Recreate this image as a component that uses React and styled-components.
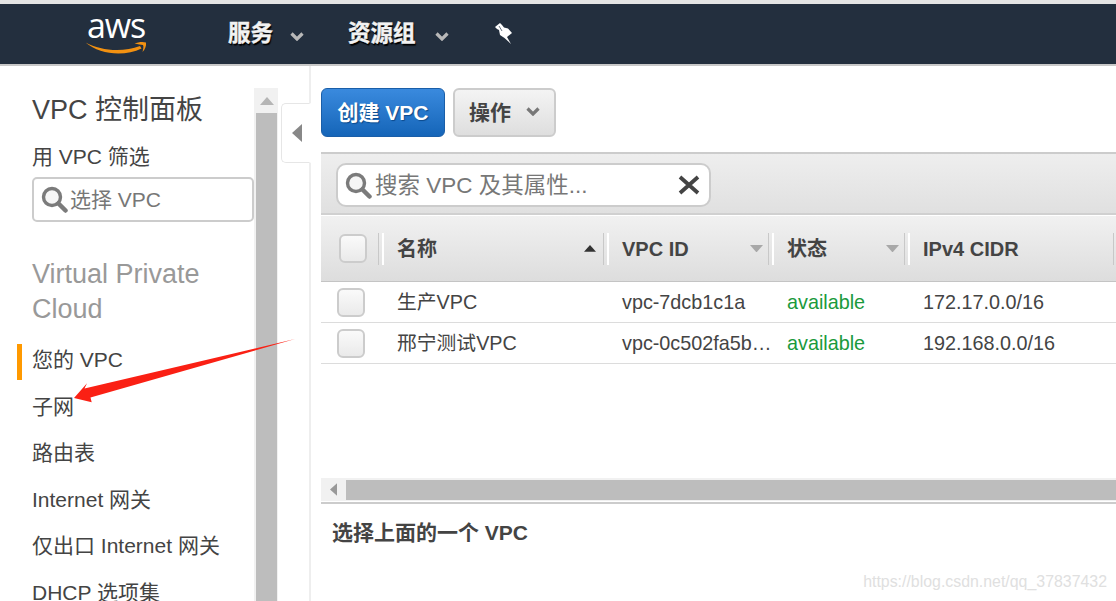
import React from "react";
import styled, { createGlobalStyle } from "styled-components";

const FONT = `"Liberation Sans", "Noto Sans CJK SC", sans-serif`;

const Global = createGlobalStyle`
  html, body { margin: 0; padding: 0; height: 601px; overflow: hidden; background: #fff; }
  body { font-family: ${FONT}; color: #444; }
  * { box-sizing: border-box; }
`;

const Page = styled.div`
  position: relative;
  width: 1116px;
  height: 601px;
  overflow: hidden;
  display: flex;
  flex-direction: column;
  border-top: 4px solid #e4e4e4;
`;

const Nav = styled.header`
  flex: none;
  height: 62px;
  background: #232f3e;
  border-bottom: 2px solid #c8c8c8;
  display: flex;
  align-items: center;
  padding-left: 85px;
`;

const Logo = styled.div`
  width: 62px;
  height: 46px;
  margin-top: -4px;
  margin-right: 81px;
  display: flex;
  flex-direction: column;
  align-items: center;
`;

const LogoText = styled.span`
  color: #fff;
  font-family: "Open Sans", sans-serif;
  font-size: 34px;
  line-height: 32px;
  height: 32px;
  letter-spacing: -1.1px;
`;

const NavItem = styled.div`
  display: flex;
  align-items: center;
  width: ${(p) => p.$w}px;
  gap: ${(p) => p.$gap}px;
  color: #f2f2f2;
  font-size: 22.5px;
  font-weight: 700;
  -webkit-text-stroke: 0.4px #f2f2f2;
  text-shadow: 1px 2px 1px #000;
  line-height: 30px;
`;

const NavChevron = styled.span`
  display: flex;
  margin-top: 4px;
`;

const Body = styled.div`
  flex: 1;
  display: flex;
  min-height: 0;
`;

const Sidebar = styled.aside`
  flex: none;
  width: 256px;
  padding: 27px 0 0 32px;
  overflow: hidden;
`;

const SideTitle = styled.h2`
  margin: 0;
  font-size: 27px;
  font-weight: 400;
  line-height: 34px;
  color: #444;
  white-space: nowrap;
`;

const FilterLabel = styled.div`
  margin-top: 16px;
  font-size: 21px;
  line-height: 28px;
  color: #444;
`;

const FilterBox = styled.div`
  margin-top: 6px;
  width: 222px;
  height: 45px;
  border: 2px solid #ccc;
  border-radius: 5px;
  display: flex;
  align-items: center;
  padding-left: 7px;
  gap: 2px;
  font-size: 21px;
  color: #777;
  background: #fff;
`;

const FilterText = styled.span`
  padding-bottom: 4px;
`;

const SectionTitle = styled.h3`
  margin: 35px 0 10px;
  width: 200px;
  font-size: 27px;
  font-weight: 400;
  line-height: 35px;
  color: #999;
`;

const SideItem = styled.div`
  position: relative;
  height: 46.5px;
  line-height: 46.5px;
  font-size: 21px;
  color: #444;
  white-space: nowrap;
  &::before {
    content: "";
    display: ${(p) => (p.$active ? "block" : "none")};
    position: absolute;
    left: -15px;
    top: 7px;
    width: 5px;
    height: 36px;
    background: #ff9900;
  }
`;

const VScroll = styled.div`
  flex: none;
  width: 24px;
  margin-left: -2px;
  margin-top: 22px;
  padding: 0 1px 0 2px;
  background: #f1f1f1;
  display: flex;
  flex-direction: column;
`;

const VArrow = styled.div`
  flex: none;
  height: 25px;
  display: flex;
  align-items: center;
  justify-content: center;
`;

const VThumb = styled.div`
  flex: 1;
  background: #bdbdbd;
`;

const Gutter = styled.div`
  flex: none;
  width: 33px;
  padding-top: 37px;
  padding-left: 3px;
  border-right: 2px solid #eeeeee;
`;

const Handle = styled.div`
  width: 30px;
  height: 60px;
  background: #fff;
  border: 1px solid #e6e6e6;
  border-right: 2px solid #fff;
  border-radius: 5px 0 0 5px;
  display: flex;
  align-items: center;
  padding-left: 10px;
`;

const Main = styled.main`
  flex: 1;
  min-width: 0;
  padding: 22px 0 0 10px;
  display: flex;
  flex-direction: column;
`;

const Actions = styled.div`
  display: flex;
  gap: 8px;
  height: 49px;
`;

const PrimaryButton = styled.div`
  width: 124px;
  border: 1px solid #1a5ea8;
  border-radius: 6px;
  background: linear-gradient(#3a8ade, #1565b8);
  color: #fff;
  font-size: 21px;
  font-weight: 700;
  display: flex;
  align-items: center;
  justify-content: center;
  padding-bottom: 4px;
  text-shadow: 1px 1px 1px #0c4a8c;
`;

const GreyButton = styled.div`
  width: 103px;
  border: 2px solid #ccc;
  border-radius: 6px;
  background: linear-gradient(#f4f4f4, #dedede);
  color: #444;
  font-size: 21px;
  font-weight: 700;
  display: flex;
  align-items: center;
  padding: 0 0 4px 14px;
  gap: 15px;
`;

const ButtonChevron = styled.span`
  display: flex;
  margin-top: 2px;
`;

const Toolbar = styled.div`
  margin-top: 15px;
  height: 63px;
  border-top: 2px solid #ccc;
  border-bottom: 2px solid #d0d0d0;
  background: linear-gradient(#eeeeee, #e0e0e0);
  padding: 9px 0 0 15px;
`;

const SearchBox = styled.div`
  width: 375px;
  height: 44px;
  border: 2px solid #ccc;
  border-radius: 10px;
  background: #fff;
  display: flex;
  align-items: center;
  padding: 0 9px 0 7px;
  font-size: 22.5px;
  color: #777;
  gap: 3px;
`;

const SearchText = styled.span`
  flex: 1;
  white-space: nowrap;
  padding-bottom: 4px;
`;

const Grid = styled.div`
  display: grid;
  grid-template-columns: 60px 225px 165px 136px 209px 1fr;
  align-items: center;
  height: ${(p) => p.$h}px;
`;

const HeadRow = styled(Grid)`
  margin-top: 1px;
  background: linear-gradient(#f1f1f1, #dddddd);
  border-bottom: 1px solid #c4c4c4;
`;

const BodyRow = styled(Grid)`
  border-bottom: 1px solid #dcdcdc;
`;

const HeadCell = styled.div`
  position: relative;
  height: 32px;
  padding: 0 0 0 16px;
  font-size: 20px;
  font-weight: 700;
  line-height: 32px;
  color: #444;
  display: flex;
  align-items: center;
  justify-content: space-between;
  white-space: nowrap;
  &::after {
    content: "";
    position: absolute;
    right: -3px;
    top: 0;
    bottom: 0;
    width: 3px;
    border-left: 1px solid #c8c8c8;
    border-right: 2px solid #fff;
    display: ${(p) => (p.$last ? "none" : "block")};
  }
`;

const CheckCell = styled(HeadCell)`
  padding: 0 0 0 18px;
`;

const SortMark = styled.span`
  display: flex;
  margin-right: ${(p) => p.$mr}px;
`;

const Check = styled.div`
  width: 28px;
  height: 29px;
  border: 2px solid #ccc;
  border-radius: 6px;
  background: linear-gradient(#fafafa, #eaeaea);
`;

const Cell = styled.div`
  padding-left: 16px;
  font-size: 19.8px;
  line-height: 24px;
  color: ${(p) => (p.$green ? "#1a9a3c" : "#444")};
  white-space: nowrap;
`;

const RowCheck = styled.div`
  padding-left: 16px;
`;

const Rows = styled.div`
  height: 196px;
`;

const HScroll = styled.div`
  height: 24px;
  background: #f1f1f1;
  display: flex;
  border-bottom: 1px solid #fff;
`;

const HArrow = styled.div`
  flex: none;
  width: 25px;
  display: flex;
  align-items: center;
  justify-content: center;
`;

const HThumb = styled.div`
  flex: 1;
  margin: 2px 0 1px;
  background: #bdbdbd;
`;

const Rule = styled.div`
  height: 2px;
  background: #cccccc;
`;

const Detail = styled.h4`
  margin: 15px 0 0 11px;
  font-size: 21px;
  font-weight: 700;
  line-height: 28px;
  color: #444;
`;

const Watermark = styled.div`
  position: absolute;
  right: 9px;
  bottom: 8px;
  font-size: 15.9px;
  line-height: 22px;
  color: #e0e0e0;
`;

const ArrowOverlay = styled.svg`
  position: absolute;
  left: 0;
  top: -4px;
  pointer-events: none;
`;

const Chevron = ({ color = "#b8b8b8", w = 14, h = 9 }) => (
  <svg width={w} height={h} viewBox="0 0 14 9">
    <path d="M1.5 1.5 L7 7 L12.5 1.5" fill="none" stroke={color} strokeWidth="3.2" />
  </svg>
);

const Tri = ({ dir, color, size = 14 }) => {
  const pts = { up: "0,8 7,0 14,8", down: "0,0 14,0 7,8" };
  return (
    <svg width={size} height={(size * 8) / 14} viewBox="0 0 14 8">
      <polygon points={pts[dir]} fill={color} />
    </svg>
  );
};

const TriLeft = ({ w, h, color }) => (
  <svg width={w} height={h} viewBox="0 0 10 18">
    <polygon points="10,0 10,18 0,9" fill={color} />
  </svg>
);

const Magnifier = ({ size = 27 }) => (
  <svg width={size} height={size} viewBox="0 0 27 27" style={{ flex: "none" }}>
    <circle cx="11" cy="11" r="8.5" fill="#f6f6f6" stroke="#7b7b7b" strokeWidth="3.4" />
    <path d="M17.5 17.5 L24.5 24.5" stroke="#7b7b7b" strokeWidth="4.5" strokeLinecap="round" />
  </svg>
);

const CloseX = () => (
  <svg width="22" height="20" viewBox="0 0 22 20" style={{ flex: "none" }}>
    <path d="M2 2 L20 18 M20 2 L2 18" stroke="#444" strokeWidth="3.8" />
  </svg>
);

const Pin = () => (
  <svg width="20" height="24" viewBox="9 8 20 24" style={{ flex: "none" }}>
    <polygon
      points="10,13 15,9 17,11 19,13.5 23,14.5 27,19 22,23 26,30 19.5,24 15,21 14,16 12,15"
      fill="#fff"
    />
    <path d="M14 12 L17 17" stroke="#6a7480" strokeWidth="1" />
  </svg>
);

const Smile = () => (
  <svg width="62" height="14" viewBox="0 0 62 14">
    <path d="M0.5 1.5 C 16 10, 38 11.5, 55 5 L 56.5 7.5 C 40 15.5, 15 14, 0.5 1.5 Z" fill="#f29111" />
    <path d="M49.5 2.5 C 53 1, 58 0.5, 61 1.5 C 61.5 4.5, 60 8.5, 57.5 11 C 58 8.5, 59 6, 58 4 C 56 3.5, 53 3.5, 49.5 2.5 Z" fill="#f29111" />
  </svg>
);

const menu = ["子网", "路由表", "Internet 网关", "仅出口 Internet 网关", "DHCP 选项集"];

const rows = [
  { name: "生产VPC", id: "vpc-7dcb1c1a", cidr: "172.17.0.0/16" },
  { name: "邢宁测试VPC", id: "vpc-0c502fa5b…", cidr: "192.168.0.0/16" },
];

export default function App() {
  return (
    <>
      <Global />
      <Page>
        <Nav>
          <Logo>
            <LogoText>aws</LogoText>
            <Smile />
          </Logo>
          <NavItem $w={120} $gap={17}>
            服务
            <NavChevron>
              <Chevron />
            </NavChevron>
          </NavItem>
          <NavItem $w={146} $gap={19}>
            资源组
            <NavChevron>
              <Chevron />
            </NavChevron>
          </NavItem>
          <Pin />
        </Nav>
        <Body>
          <Sidebar>
            <SideTitle>VPC 控制面板</SideTitle>
            <FilterLabel>用 VPC 筛选</FilterLabel>
            <FilterBox>
              <Magnifier />
              <FilterText>选择 VPC</FilterText>
            </FilterBox>
            <SectionTitle>Virtual Private Cloud</SectionTitle>
            <SideItem $active>您的 VPC</SideItem>
            {menu.map((m) => (
              <SideItem key={m}>{m}</SideItem>
            ))}
          </Sidebar>
          <VScroll>
            <VArrow>
              <Tri dir="up" color="#b5b5b5" />
            </VArrow>
            <VThumb />
          </VScroll>
          <Gutter>
            <Handle>
              <TriLeft w={10} h={18} color="#888" />
            </Handle>
          </Gutter>
          <Main>
            <Actions>
              <PrimaryButton>创建 VPC</PrimaryButton>
              <GreyButton>
                操作
                <ButtonChevron>
                  <Chevron color="#777" />
                </ButtonChevron>
              </GreyButton>
            </Actions>
            <Toolbar>
              <SearchBox>
                <Magnifier />
                <SearchText>搜索 VPC 及其属性...</SearchText>
                <CloseX />
              </SearchBox>
            </Toolbar>
            <HeadRow $h={66}>
              <CheckCell>
                <Check />
              </CheckCell>
              <HeadCell>
                名称
                <SortMark $mr={10}>
                  <Tri dir="up" color="#333" size={12} />
                </SortMark>
              </HeadCell>
              <HeadCell>
                VPC ID
                <SortMark $mr={8}>
                  <Tri dir="down" color="#a8a8a8" size={13} />
                </SortMark>
              </HeadCell>
              <HeadCell>
                状态
                <SortMark $mr={8}>
                  <Tri dir="down" color="#a8a8a8" size={13} />
                </SortMark>
              </HeadCell>
              <HeadCell>IPv4 CIDR</HeadCell>
              <HeadCell $last />
            </HeadRow>
            <Rows>
              {rows.map((r) => (
                <BodyRow $h={41} key={r.id}>
                  <RowCheck>
                    <Check />
                  </RowCheck>
                  <Cell>{r.name}</Cell>
                  <Cell>{r.id}</Cell>
                  <Cell $green>available</Cell>
                  <Cell>{r.cidr}</Cell>
                  <Cell />
                </BodyRow>
              ))}
            </Rows>
            <HScroll>
              <HArrow>
                <TriLeft w={7} h={13} color="#999" />
              </HArrow>
              <HThumb />
            </HScroll>
            <Rule />
            <Detail>选择上面的一个 VPC</Detail>
          </Main>
        </Body>
        <Watermark>https://blog.csdn.net/qq_37837432</Watermark>
        <ArrowOverlay width="1116" height="601" viewBox="0 0 1116 601">
          <polygon
            points="295,339 84.5,388.5 87,383.3 74,398 91.7,402.3 90.5,397.5"
            fill="#fa2014"
          />
        </ArrowOverlay>
      </Page>
    </>
  );
}
